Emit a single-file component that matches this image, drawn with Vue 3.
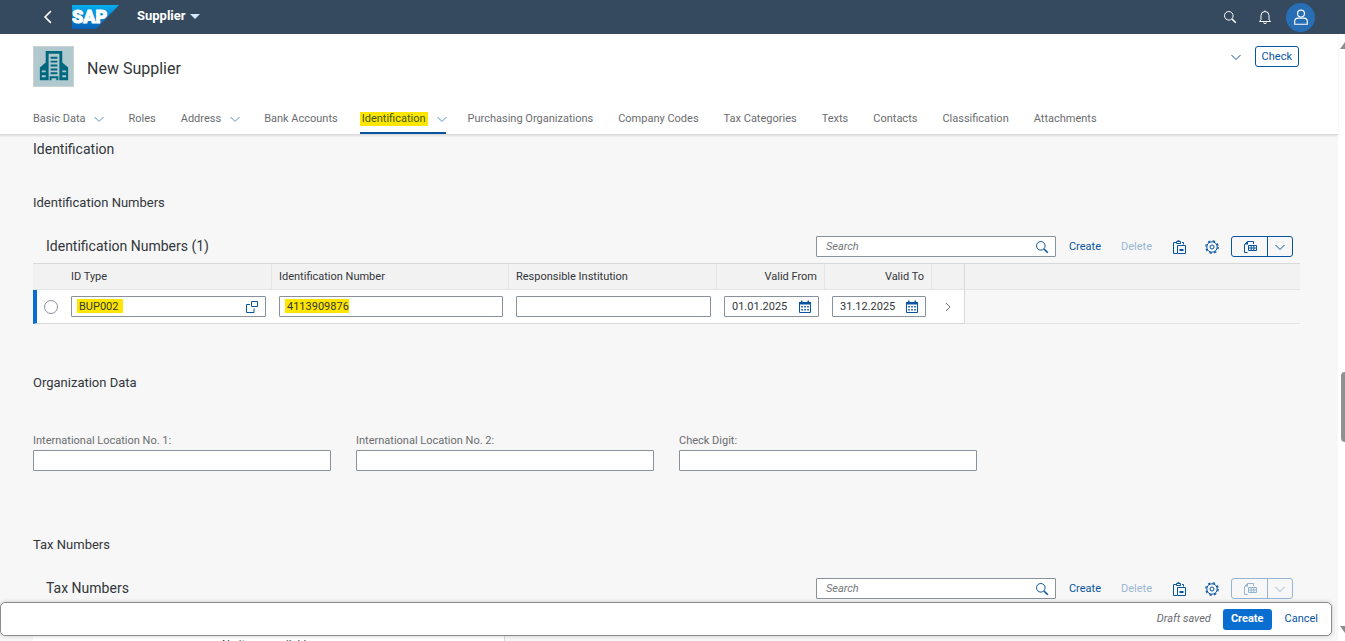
<script setup>
import { ref } from 'vue'

const tabs = [
  { label: 'Basic Data', menu: true },
  { label: 'Roles' },
  { label: 'Address', menu: true },
  { label: 'Bank Accounts' },
  { label: 'Identification', menu: true },
  { label: 'Purchasing Organizations' },
  { label: 'Company Codes' },
  { label: 'Tax Categories' },
  { label: 'Texts' },
  { label: 'Contacts' },
  { label: 'Classification' },
  { label: 'Attachments' }
]
const activeTab = ref('Identification')

const idRow = ref({
  type: 'BUP002',
  number: '4113909876',
  institution: '',
  from: '01.01.2025',
  to: '31.12.2025'
})

const locations = ref([
  { id: 'loc1', label: 'International Location No. 1:', value: '' },
  { id: 'loc2', label: 'International Location No. 2:', value: '' },
  { id: 'digit', label: 'Check Digit:', value: '' }
])

const toolbars = {
  ids: { title: 'Identification Numbers (1)', exportable: true },
  tax: { title: 'Tax Numbers', exportable: false }
}
</script>

<template>
  <div class="page">
    <!-- shared icon shapes -->
    <svg class="defs" aria-hidden="true">
      <symbol id="down" viewBox="0 0 12 12"><path d="M1.5 4 6 8.5 10.5 4" /></symbol>
      <symbol id="right" viewBox="0 0 12 12"><path d="M4 2l4 4-4 4" /></symbol>
      <symbol id="search" viewBox="0 0 14 14">
        <circle cx="5.8" cy="5.8" r="4.3" />
        <path d="M9 9l3.8 3.8" stroke-width="1.6" />
      </symbol>
      <symbol id="calendar" viewBox="0 0 14 14">
        <path d="M1.5 2.5h11v10h-11z" />
        <path d="M1 2h12v2.6H1zM3 .5h1.5V3H3zM9.5 .5H11V3H9.5zM3.2 6h1.6v1.6H3.2zM6.2 6h1.6v1.6H6.2zM9.2 6h1.6v1.6H9.2zM3.2 9h1.6v1.6H3.2zM6.2 9h1.6v1.6H6.2zM9.2 9h1.6v1.6H9.2z" class="solid" />
      </symbol>
      <symbol id="paste" viewBox="0 0 14 14">
        <path d="M4 2.5H1.5v11H5M10 2.500h1.500V4.500M4.500 3.500v-2h4v2zM5.500 5.500h8v8h-8z" />
        <path d="M7.500 9h4v2h-4zM5.500.3h2v1.200h-2z" class="solid" />
      </symbol>
      <symbol id="gear" viewBox="0 0 14 14">
        <circle cx="7" cy="7" r="5.200" />
        <circle cx="7" cy="7" r="6.200" stroke-dasharray="2.400 2.470" stroke-width="1.200" />
        <circle cx="7" cy="7" r="2" />
      </symbol>
      <symbol id="export" viewBox="0 0 14 14">
        <path d="M4.500 12.500h-3V4.500l3-3h6V4M5.500 5.500h8v5h-8zM5.500 8h8M8.200 5.500v5M10.800 5.500v5" />
        <path d="M1.500 4.500 5 1v3.500z" class="solid" />
      </symbol>
      <symbol id="help" viewBox="0 0 12 12">
        <path d="M5.500.5h6v5h-6zM4 3.500H.5v8H8v-4" />
      </symbol>
    </svg>

    <header class="shell">
      <button class="plain back" aria-label="Back">
        <svg class="icon" viewBox="0 0 12 12"><path d="M8.500 1 3.500 6l5 5" /></svg>
      </button>
      <svg class="logo" viewBox="0 0 47 24" role="img" aria-label="SAP">
        <defs>
          <linearGradient id="sap" x1="0" y1="0" x2="0" y2="1">
            <stop offset="0" stop-color="#04aeef" />
            <stop offset="1" stop-color="#0a5fb5" />
          </linearGradient>
        </defs>
        <path d="M0 0h47L24 24H0z" fill="url(#sap)" />
        <text x="0" y="18">SAP</text>
      </svg>
      <button class="plain app-title">Supplier <span class="caret"></span></button>
      <span class="spacer"></span>
      <button class="plain shell-btn" aria-label="Search"><svg class="icon"><use href="#search" /></svg></button>
      <button class="plain shell-btn" aria-label="Notifications">
        <svg class="icon" viewBox="0 0 14 14"><path d="M7 .5v1M1.500 11.500h11L11 9.500V5.500a4 4 0 0 0-8 0v4zM5.500 12.500a1.500 1 0 0 0 3 0" /></svg>
      </button>
      <button class="plain avatar" aria-label="User">
        <svg class="icon large" viewBox="0 0 14 14"><circle cx="7" cy="4" r="3" /><path d="M1.500 13.300V11q0-3 3-3h5q3 0 3 3v2.300z" /></svg>
      </button>
    </header>

    <div class="body">
      <div class="column">
        <section class="object-header">
          <div class="title-row">
            <svg class="building" viewBox="0 0 40 40" aria-hidden="true">
              <path d="M12 4h17v30h-3V7H15v27h-3zM6 21l6-5v18H6zM35 21l-6-5v18h6z" />
              <path d="M17 10h7v2h-7zM17 14h7v2h-7zM17 18h7v2h-7zM17 22h7v2h-7zM17 26h7v2h-7zM16 30h9v4h-2v-2h-5v2h-2z" />
              <path d="M8 24h4v2H8zM8 29h4v2H8zM29 24h4v2h-4zM29 29h4v2h-4z" class="window" />
            </svg>
            <h1>New Supplier</h1>
            <span class="spacer"></span>
            <button class="plain" aria-label="Expand header"><svg class="icon small"><use href="#down" /></svg></button>
            <button class="outlined check">Check</button>
          </div>
          <nav class="tabs">
            <a v-for="tab in tabs" :key="tab.label" href="#" :class="{ active: tab.label === activeTab }" @click.prevent="activeTab = tab.label">
              <span>{{ tab.label }}</span>
              <svg v-if="tab.menu" class="icon small"><use href="#down" /></svg>
            </a>
          </nav>
        </section>

        <main>
          <h2>Identification</h2>

          <template v-for="(bar, key) in toolbars" :key="key">
            <h3>{{ key === 'ids' ? 'Identification Numbers' : 'Tax Numbers' }}</h3>
            <div class="toolbar">
              <h4>{{ bar.title }}</h4>
              <span class="spacer"></span>
              <div class="field search">
                <input type="text" placeholder="Search" :aria-label="'Search ' + bar.title">
                <button class="plain" aria-label="Search"><svg class="icon"><use href="#search" /></svg></button>
              </div>
              <button class="plain action">Create</button>
              <button class="plain action" disabled>Delete</button>
              <button class="plain tool" aria-label="Paste"><svg class="icon"><use href="#paste" /></svg></button>
              <button class="plain tool" aria-label="Settings"><svg class="icon"><use href="#gear" /></svg></button>
              <div class="split" :class="{ off: !bar.exportable }">
                <button class="plain" :disabled="!bar.exportable" aria-label="Export"><svg class="icon"><use href="#export" /></svg></button>
                <button class="plain" :disabled="!bar.exportable" aria-label="Export options"><svg class="icon small"><use href="#down" /></svg></button>
              </div>
            </div>

            <template v-if="key === 'ids'">
              <table>
                <colgroup>
                  <col class="c-sel"><col class="c-mid"><col class="c-wide"><col class="c-mid"><col class="c-from"><col class="c-to"><col class="c-nav"><col>
                </colgroup>
                <thead>
                  <tr>
                    <th class="bare"></th>
                    <th>ID Type</th>
                    <th>Identification Number</th>
                    <th>Responsible Institution</th>
                    <th class="end">Valid From</th>
                    <th class="end">Valid To</th>
                    <th class="last"></th>
                    <th class="bare"></th>
                  </tr>
                </thead>
                <tbody>
                  <tr>
                    <td class="select"><input type="radio" name="row" aria-label="Select row"></td>
                    <td>
                      <div class="field">
                        <input v-model="idRow.type" class="mark mark-type" type="text" aria-label="ID Type">
                        <button class="plain" aria-label="Value help"><svg class="icon small"><use href="#help" /></svg></button>
                      </div>
                    </td>
                    <td><div class="field"><input v-model="idRow.number" class="mark mark-number" type="text" aria-label="Identification Number"></div></td>
                    <td><div class="field"><input v-model="idRow.institution" type="text" aria-label="Responsible Institution"></div></td>
                    <td>
                      <div class="field date">
                        <input v-model="idRow.from" type="text" aria-label="Valid From">
                        <button class="plain" aria-label="Open calendar"><svg class="icon"><use href="#calendar" /></svg></button>
                      </div>
                    </td>
                    <td>
                      <div class="field date">
                        <input v-model="idRow.to" type="text" aria-label="Valid To">
                        <button class="plain" aria-label="Open calendar"><svg class="icon"><use href="#calendar" /></svg></button>
                      </div>
                    </td>
                    <td class="nav last"><button class="plain" aria-label="Details"><svg class="icon small"><use href="#right" /></svg></button></td>
                    <td class="filler"></td>
                  </tr>
                </tbody>
              </table>

              <h3 class="org">Organization Data</h3>
              <div class="form">
                <div v-for="item in locations" :key="item.id" class="form-item">
                  <label :for="item.id">{{ item.label }}</label>
                  <div class="field"><input :id="item.id" v-model="item.value" type="text"></div>
                </div>
              </div>
            </template>

            <div v-else class="empty-table">
              <div class="empty-head"></div>
              <div class="empty-row">No items available.</div>
            </div>
          </template>
        </main>

        <footer>
          <span class="draft">Draft saved</span>
          <button class="emphasized">Create</button>
          <button class="plain action">Cancel</button>
        </footer>
      </div>

      <div class="rail" aria-hidden="true">
        <span class="arrow up"></span>
        <span class="thumb"></span>
        <span class="arrow dn"></span>
      </div>
    </div>
  </div>
</template>

<style>
body { margin: 0; overflow: hidden; }
</style>

<style scoped>
* { box-sizing: border-box; }
.page { height: 100vh; display: flex; flex-direction: column; font-family: Roboto, "Liberation Sans", sans-serif; font-size: 11px; line-height: 16px; color: #32363a; background: #f7f7f7; }
.defs { position: absolute; width: 0; height: 0; }
.icon { width: 14px; height: 14px; display: block; fill: none; stroke: currentColor; stroke-width: 1; flex: none; }
.icon.small { width: 12px; height: 12px; }
.icon.large { width: 16px; height: 16px; }
.solid { fill: currentColor; stroke: none; }
.spacer { flex: 1; }
h1, h2, h3, h4 { margin: 0; font-weight: 400; }
input { font: inherit; color: inherit; }
.plain { border: 0; padding: 0; background: none; font: inherit; color: #0854a0; cursor: pointer; display: flex; align-items: center; justify-content: center; }
.plain:disabled { opacity: 0.4; cursor: default; }

.shell { flex: none; height: 34px; background: #354a5f; display: flex; align-items: center; padding: 0 30px 0 41px; }
.shell .plain { color: #fff; }
.back { width: 14px; margin-right: 17px; }
.back .icon { stroke-width: 1.4; }
.logo { width: 47px; height: 24px; margin-right: 18px; }
.logo text { font-family: Roboto, "Liberation Sans", sans-serif; font-weight: 900; font-size: 18px; fill: #fff; stroke: #fff; stroke-width: 1px; }
.app-title.plain { font-size: 13px; font-weight: 700; gap: 4px; padding-bottom: 2px; }
.caret { border: 5px solid transparent; border-top-color: #d1e8ff; border-bottom: 0; }
.shell-btn { width: 35px; height: 30px; }
.avatar { width: 29px; height: 29px; border-radius: 50%; margin-left: 4px; }
.shell .avatar { background: #286eb4; }

.body { flex: 1; min-height: 0; display: flex; }
.column { flex: 1; min-width: 0; display: flex; flex-direction: column; position: relative; }

.object-header { flex: none; background: #fff; border-bottom: 1px solid #d9d9d9; box-shadow: 0 1px 2px rgba(0, 0, 0, 0.1); z-index: 1; }
.title-row { display: flex; align-items: flex-start; padding: 12px 39px 0 33px; }
.title-row > .plain { height: 21px; }
.building { width: 41px; height: 41px; background: #b0c9ce; border: 1px solid #d0d0d0; margin-right: 13px; fill: #00677f; }
.building .window { fill: #b0c9ce; }
h1 { font-size: 16px; line-height: 20px; padding-top: 13px; }
.outlined { border: 1px solid #0854a0; border-radius: 3px; background: #fff; color: #0854a0; font: inherit; line-height: 19px; padding: 0 6px; }
.check { margin-left: 13px; }

.tabs { display: flex; gap: 25px; padding: 15px 33px 0; height: 47px; }
.tabs a { display: flex; align-items: center; gap: 8px; height: 32px; padding-top: 4px; color: #6a6d70; text-decoration: none; white-space: nowrap; border-bottom: 2px solid transparent; }
.tabs .icon { color: #5496cd; margin-right: -2px; }
.tabs a.active { margin: 0 -3px; color: #3d5a14; border-color: #0854a0; }
.tabs a.active span { background: #ffe600; line-height: 14px; padding: 0 2px; }

main { flex: 1; min-height: 0; overflow: hidden; padding: 4px 38px 0 33px; }
h2 { font-size: 14px; line-height: 20px; }
h3 { font-size: 13px; line-height: 20px; margin-top: 34px; }
.toolbar { display: flex; align-items: center; padding: 0 7px 0 13px; height: 33px; margin-top: 17px; }
h4 { font-size: 14px; line-height: 20px; padding-bottom: 2px; }
.field { display: flex; align-items: center; height: 21px; background: #fff; border: 1px solid #89919a; border-radius: 1px; }
.field input { flex: 1; min-width: 0; width: 0; height: 19px; border: 0; padding: 0 0 0 7px; background: transparent; outline: none; }
.field .plain { width: 26px; height: 19px; }
.field input::placeholder { color: #74777a; font-style: italic; }
.search { width: 240px; margin-right: 13px; }
.field.search input { padding-left: 9px; }
.action { margin-right: 20px; }
.tool { width: 14px; margin-right: 19px; }
.tool + .tool { margin-right: 12px; }
.split { display: flex; height: 21px; border: 1px solid #0854a0; border-radius: 3px; }
.split button { width: 35px; }
.split button + button { width: 25px; border-left: 1px solid #0854a0; }
.split.off { opacity: 0.4; }
.split.off button { opacity: 1; }

table { width: 100%; table-layout: fixed; border-collapse: separate; border-spacing: 0; border-top: 1px solid #d9d9d9; }
.c-sel { width: 31px; }
.c-mid { width: 208px; }
.c-wide { width: 237px; }
.c-from { width: 108px; }
.c-to { width: 107px; }
.c-nav { width: 33px; }
th { height: 26px; padding: 0 7px; text-align: left; font-weight: 400; background: #f2f2f2; border-right: 1px solid #e5e5e5; border-bottom: 1px solid #e5e5e5; }
th.bare { border-right: 0; }
th.end { text-align: right; }
td { height: 34px; padding: 0 6px 0 7px; background: #fff; border-bottom: 1px solid #d9d9d9; }
.last { border-right: 1px solid #d9d9d9; }
td.filler { background: transparent; border-bottom-color: #e5e5e5; }
td.select { border-left: 4px solid #0a6ed1; }
.select input { appearance: none; display: block; width: 14px; height: 14px; margin: 0; border: 1px solid #89919a; border-radius: 50%; background: #fff; }
td.nav .plain { margin-left: 3px; color: #74777a; }
.field .mark { background: linear-gradient(#ffe600, #ffe600) no-repeat; }
.field .mark-type { background-size: 46px 14px; background-position: 5px 2px; }
.field .mark-number { background-size: 64px 14px; background-position: 5px 2px; }

.org { margin-top: 49px; }
.form { display: grid; grid-template-columns: repeat(4, 1fr); gap: 25px; margin-top: 39px; margin-bottom: 64px; }
.form label { display: block; color: #6a6d70; line-height: 18px; }
.empty-table { border-top: 1px solid #d9d9d9; }
.empty-head { height: 26px; background: #f2f2f2; }
.empty-row { width: 472px; background: #fff; border-right: 1px solid #d9d9d9; text-align: center; height: 33px; padding-top: 5px; }

/* floating bar over the page content */
footer { position: absolute; left: 0; right: 6px; bottom: 5px; z-index: 2; height: 34px; display: flex; align-items: center; justify-content: flex-end; padding-right: 13px; background: #fff; border: 1px solid #8c8c8c; border-radius: 5px; box-shadow: 0 0 4px rgba(0, 0, 0, 0.2); }
footer .action { margin: 0; }
.draft { font-style: italic; color: #6a6d70; margin-right: 12px; }
.emphasized { height: 21px; padding: 0 8px; margin-right: 13px; border: 0; border-radius: 3px; background: #0a6ed1; color: #fff; font: inherit; font-weight: 700; }

.rail { flex: none; width: 7px; background: #fff; position: relative; overflow: hidden; }
.thumb { position: absolute; left: 3px; top: 55.7%; width: 8px; height: 70px; border-radius: 4px; background: #919191; }
.arrow { position: absolute; left: 2px; border: 5px solid transparent; }
.up { top: 8px; border-top: 0; border-bottom: 7px solid #8c8c8c; }
.dn { bottom: 8px; border-bottom: 0; border-top: 7px solid #8c8c8c; }
</style>
